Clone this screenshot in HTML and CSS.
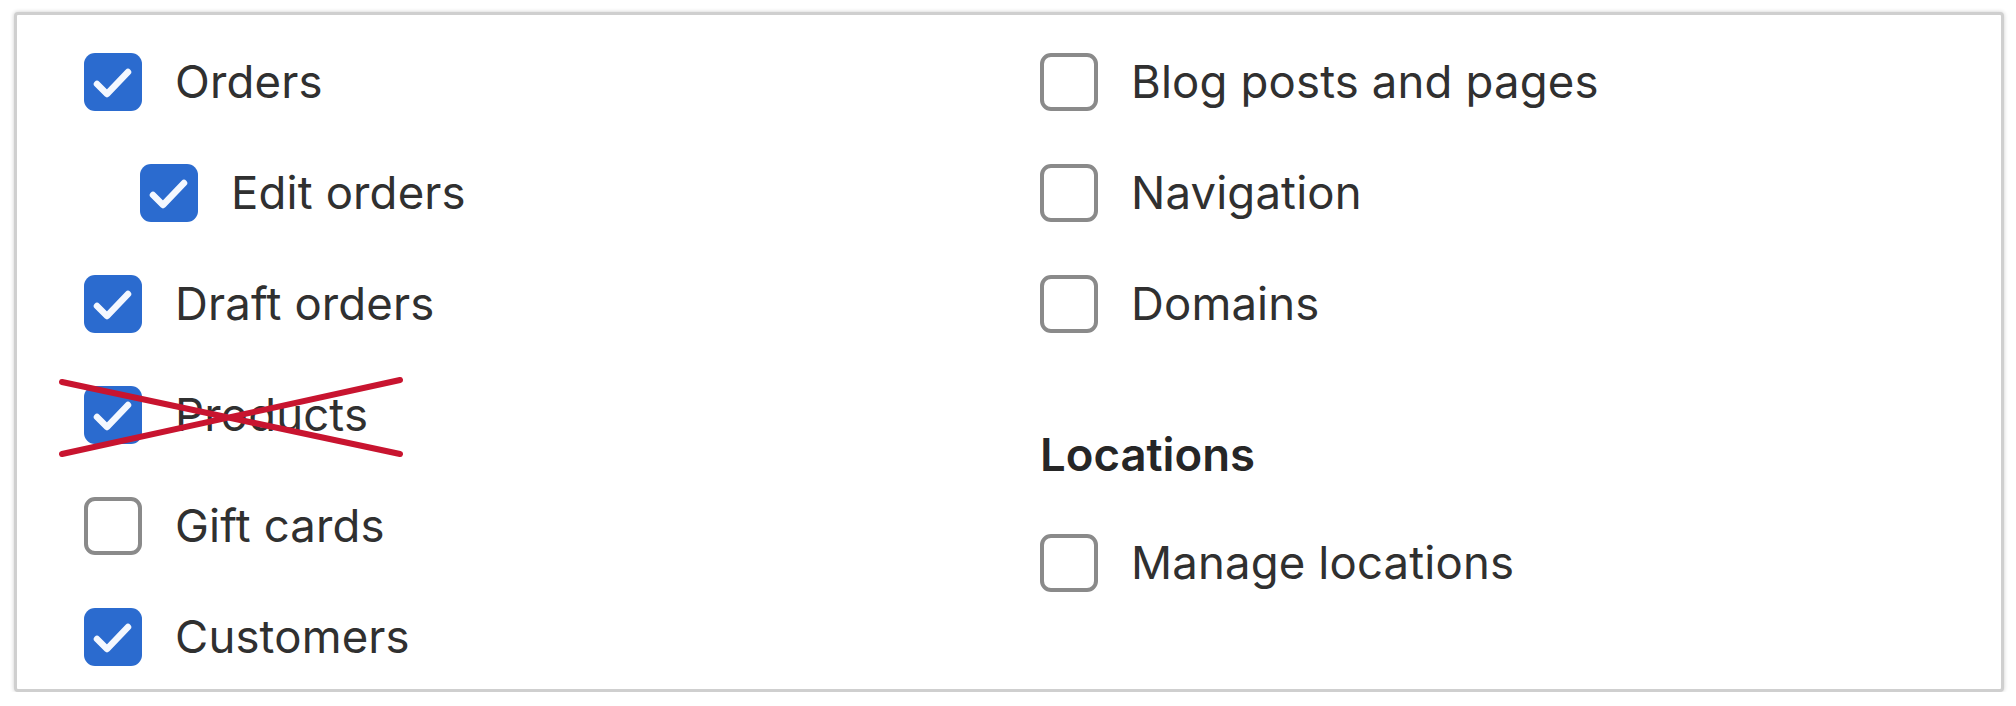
FILE: index.html
```html
<!DOCTYPE html>
<html>
<head>
<meta charset="utf-8">
<link rel="stylesheet" href="styles.css">
</head>
<body>
<div class="card">
  <div class="col col-left">
    <label class="row"><span class="cb checked"><svg viewBox="0 0 58 58"><path d="M13 31 L23 41 L44 19"/></svg></span><span class="lbl">Orders</span></label>
    <label class="row sub"><span class="cb checked"><svg viewBox="0 0 58 58"><path d="M13 31 L23 41 L44 19"/></svg></span><span class="lbl">Edit orders</span></label>
    <label class="row"><span class="cb checked"><svg viewBox="0 0 58 58"><path d="M13 31 L23 41 L44 19"/></svg></span><span class="lbl">Draft orders</span></label>
    <label class="row struck"><span class="cb checked"><svg viewBox="0 0 58 58"><path d="M13 31 L23 41 L44 19"/></svg></span><span class="lbl">Products</span>
      <svg class="cross" viewBox="0 0 340 76"><path d="M0 2 L338 74 M0 74 L338 0"/></svg>
    </label>
    <label class="row"><span class="cb"></span><span class="lbl">Gift cards</span></label>
    <label class="row"><span class="cb checked"><svg viewBox="0 0 58 58"><path d="M13 31 L23 41 L44 19"/></svg></span><span class="lbl">Customers</span></label>
  </div>
  <div class="col col-right">
    <label class="row"><span class="cb"></span><span class="lbl">Blog posts and pages</span></label>
    <label class="row"><span class="cb"></span><span class="lbl">Navigation</span></label>
    <label class="row"><span class="cb"></span><span class="lbl">Domains</span></label>
    <h3 class="heading">Locations</h3>
    <label class="row"><span class="cb"></span><span class="lbl">Manage locations</span></label>
  </div>
</div>
</body>
</html>
```
FILE: styles.css
```css
html, body {
  margin: 0;
  padding: 0;
  background: #ffffff;
}
body {
  font-family: Inter, "Noto Sans", sans-serif;
  color: #303030;
}
.card {
  margin: 12px 12px 0 14px;
  height: 680px;
  border: 3px solid #cfcfcf;
  border-radius: 4px;
  box-shadow: 0 0 4px rgba(0,0,0,0.2);
  background: #fff;
  display: grid;
  grid-template-columns: 956px 1fr;
  padding: 11px 0 0 67px;
  box-sizing: border-box;
}
.col {
  display: flex;
  flex-direction: column;
}
.row {
  position: relative;
  height: 111px;
  display: flex;
  align-items: center;
  gap: 33px;
}
.row.sub {
  padding-left: 56px;
}
.cb {
  width: 58px;
  height: 58px;
  box-sizing: border-box;
  border: 4px solid #8a8a8a;
  border-radius: 11px;
  flex: none;
  display: flex;
}
.cb.checked {
  border: none;
  background: #2b6bcf;
}
.cb svg {
  width: 58px;
  height: 58px;
}
.cb svg path {
  fill: none;
  stroke: #f4f8ff;
  stroke-width: 6.5;
  stroke-linecap: round;
  stroke-linejoin: round;
}
.lbl {
  font-size: 45.5px;
  font-weight: 400;
  letter-spacing: 0.15px;
  line-height: 1;
}
.cross {
  position: absolute;
  left: -22px;
  top: 21px;
  width: 340px;
  height: 76px;
  overflow: visible;
}
.cross path {
  stroke: #c8142f;
  stroke-width: 6;
  stroke-linecap: round;
  fill: none;
}
.heading {
  margin: 68px 0 24px 0;
  height: 56px;
  line-height: 56px;
  font-size: 45.5px;
  font-weight: 600;
  color: #262626;
}
```
